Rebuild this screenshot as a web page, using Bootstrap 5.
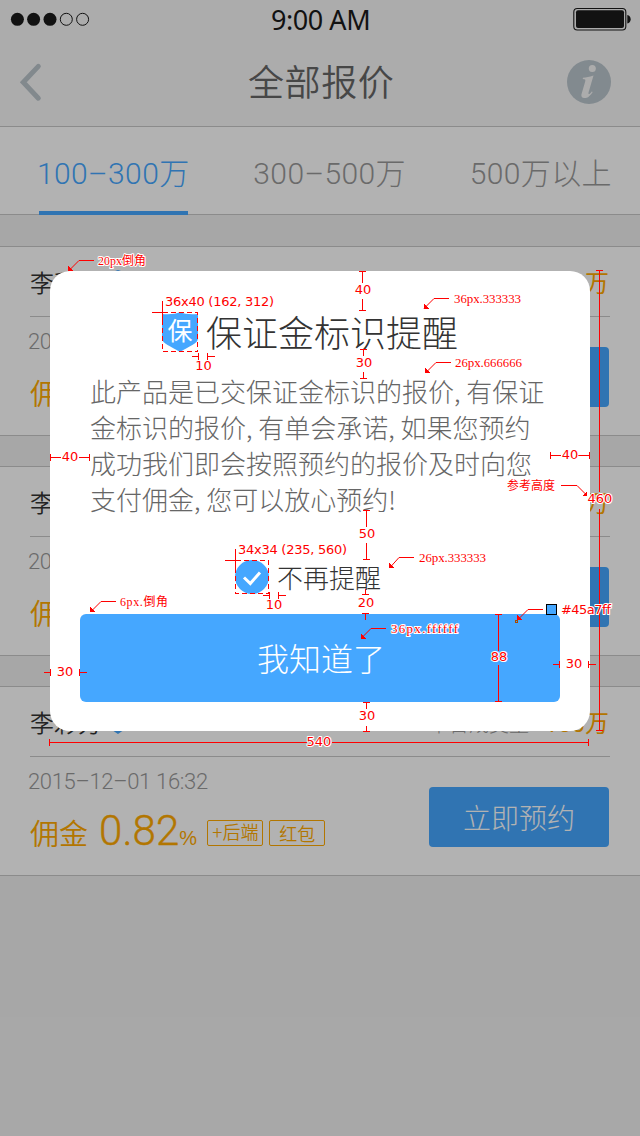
<!DOCTYPE html>
<html lang="zh-CN">
<head>
<meta charset="utf-8">
<meta name="viewport" content="width=device-width, initial-scale=1">
<title>全部报价</title>
<link href="https://cdn.jsdelivr.net/npm/bootstrap@5.3.0/dist/css/bootstrap.min.css" rel="stylesheet">
<style>
  body{font-family:"Noto Sans CJK SC",sans-serif;font-weight:300;background:#f0f0f0;line-height:1;color:#333}
  .screen{width:640px;height:1136px;overflow:hidden}
  .num{font-family:Roboto,"Noto Sans CJK SC",sans-serif;font-weight:300}
  .top-area{height:127px;background:#f7f7f7;border-bottom:1px solid #c8c8c8}
  .status{height:40px;padding:0 9px 0 10px}
  .clock{font:400 27px/40px "Noto Sans","Open Sans",sans-serif;letter-spacing:-.45px;color:#1a1a1a;left:271px;top:0}
  .titlebar{height:84px;padding:0 29px 0 19px}
  .titlebar h1{font-size:36px;font-weight:350;color:#666;letter-spacing:.6px;left:248px;top:22px;line-height:36px}
  .tabs{height:88px;background:#fff;border-bottom:1px solid #c8c8c8;padding:0 28px 0 37px}
  .tabs a{height:88px;line-height:93px;font-size:30px;color:#999;text-decoration:none;letter-spacing:.4px}
  .tabs a.on{color:#45a7ff;position:relative}
  .tabs a.on::after{content:"";position:absolute;left:2px;width:149px;bottom:0;height:4px;background:#45a7ff}
  .offers{padding-top:31px;gap:30px}
  .offer{height:190px;background:#fff;border:solid #c8c8c8;border-width:1px 0;padding:0 31px 0 30px}
  .offer-head{height:70px;border-bottom:1px solid #c8c8c8;font-size:24px;margin-right:-1px;padding:1px 1px 0 0}
  .who{width:78px;font-weight:350}
  .note-text{color:#999;font-size:20px;padding-top:3px}
  .sum{width:80px;text-align:right;font-size:24px;font-weight:400;color:#fa0;padding-top:3px}
  .date{font-size:22px;color:#999;letter-spacing:-.33px;margin-left:-2px;padding-top:13px;line-height:23px}
  .rate{margin-top:17px;color:#fa0;height:42px}
  .rate-label{font-size:29px;line-height:30px;margin-top:7px;width:69px;font-weight:350}
  .rate-value{font:300 42px/42px Roboto,sans-serif;letter-spacing:.1px;-webkit-text-stroke:.4px #fa0}
  .rate-unit{width:28px;font:400 20px/20px "Liberation Sans",sans-serif;margin-top:18px}
  .tagbox{width:56px;height:26px;border:1px solid #fa0;border-radius:2px;font-size:18px;margin:10px 6px 0 0;white-space:nowrap;font-weight:350}
  .book{width:180px;height:60px;border:0;border-radius:4px;background:#45a7ff;color:#fff;font-size:28px;font-weight:300;line-height:60px;margin-top:30px;padding:0}
  .shade{background:rgba(0,0,0,.3)}
  .dialog-box{left:50px;top:271px;width:540px;height:460px;border-radius:20px;background:#fff;padding:40px 30px 30px}
  .dialog-box h2{font-size:36px;line-height:40px;font-weight:300;margin:0;color:#333}
  .msg{font-size:26px;line-height:36px;color:#666;margin:20px 10px 0;white-space:nowrap}
  .remind{font-size:26px;line-height:33px;margin-top:43px;padding-left:155px}
  .ok{height:88px;border:0;border-radius:6px;background:#45a7ff;color:#fff;font-size:32px;font-weight:300;margin-top:20px;padding:0 0 3px 2px}
  .spec{pointer-events:none}
  .spec path,.spec rect{fill:none;stroke:#f00;stroke-width:1;shape-rendering:crispEdges}
  .spec .lead-line{shape-rendering:auto}
  .spec .tip{fill:#f00;stroke:none}
  .spec text{font:13px "DejaVu Sans",sans-serif;fill:#f00;stroke:#fff;stroke-width:2px;paint-order:stroke;stroke-linejoin:round}
  .spec .bm{font:13px "Liberation Serif","Noto Sans CJK SC",serif}
  .spec .bm.cn{font-size:12px}
</style>
</head>
<body>
<div class="screen position-relative">
  <header class="top-area position-relative">
    <div class="status d-flex justify-content-between align-items-start">
      <svg width="82" height="38" viewBox="10 0 82 38"><g fill="#1a1a1a"><circle cx="17.4" cy="19.3" r="6.5"/><circle cx="33.6" cy="19.3" r="6.5"/><circle cx="50" cy="19.3" r="6.5"/></g><g fill="none" stroke="#1a1a1a"><circle cx="66.3" cy="19.3" r="6"/><circle cx="82.6" cy="19.3" r="6"/></g></svg>
      <span class="clock position-absolute">9:00 AM</span>
      <svg width="60" height="38" viewBox="571 0 60 38"><rect x="573.8" y="8.5" width="52" height="21.5" rx="3.5" fill="none" stroke="#1a1a1a" stroke-width="1.1"/><rect x="576" y="10.3" width="48" height="17.6" rx="2" fill="#1a1a1a"/><path d="M627.3 15c4.500 1 4.500 7.500 0 8.500z" fill="#1a1a1a"/></svg>
    </div>
    <div class="titlebar d-flex justify-content-between align-items-center position-relative">
      <svg width="24" height="40" viewBox="19 62.500 24 40" fill="none" stroke="#bac4cb" stroke-width="5" stroke-linecap="round" stroke-linejoin="miter"><path d="M38.300 66.900 23.300 82.800l15 15.900"/></svg>
      <h1 class="position-absolute m-0">全部报价</h1>
      <svg width="44" height="44" viewBox="567 60 44 44"><circle cx="589" cy="82" r="22" fill="#bbc6cd"/><circle cx="592.300" cy="68.500" r="3.500" fill="#f7f7f7"/><path d="M583 77.800c3.500-.3 6-.8 10.500-2.300l-4.900 16.800c-.6 2.300.6 2.700 3.200-.9l.9.700c-3.300 5-5.700 6-7.700 6-2.900 0-4.300-1.600-3.300-4.600l3.500-12.100c.5-1.800.1-2.400-2.500-2.500z" fill="#f7f7f7"/></svg>
    </div>
  </header>
  <nav class="tabs num d-flex justify-content-between">
    <a class="on" href="#">100–300万</a><a href="#">300–500万</a><a href="#">500万以上</a>
  </nav>
  <main class="offers d-flex flex-column">
    <section class="offer">
      <div class="offer-head d-flex align-items-center"><span class="who">李彩芳</span><svg width="20" height="24" viewBox="0 0 36 40" preserveAspectRatio="none"><path d="M0 2Q12 3 18 0q6 3 18 2v24c0 6-9 8-18 14C9 34 0 32 0 26z" fill="#45a7ff"/></svg><span class="note-text ms-auto">平台成交量</span><span class="sum num">100万</span></div>
      <div class="d-flex justify-content-between"><div><div class="date num">2015–12–01 16:32</div><div class="rate d-flex align-items-start"><span class="rate-label">佣金</span></div></div><button class="book btn">立即预约</button></div>
    </section>
    <section class="offer">
      <div class="offer-head d-flex align-items-center"><span class="who">李彩芳</span><span class="sum num ms-auto">100万</span></div>
      <div class="d-flex justify-content-between"><div><div class="date num">2015–12–01 16:32</div><div class="rate d-flex align-items-start"><span class="rate-label">佣金</span></div></div><button class="book btn">立即预约</button></div>
    </section>
    <section class="offer">
      <div class="offer-head d-flex align-items-center"><span class="who">李彩芳</span><svg width="20" height="24" viewBox="0 0 36 40" preserveAspectRatio="none"><path d="M0 2Q12 3 18 0q6 3 18 2v24c0 6-9 8-18 14C9 34 0 32 0 26z" fill="#45a7ff"/></svg><span class="note-text ms-auto">平台成交量</span><span class="sum num">100万</span></div>
      <div class="d-flex justify-content-between"><div><div class="date num">2015–12–01 16:32</div><div class="rate d-flex align-items-start"><span class="rate-label">佣金</span><span class="rate-value">0.82</span><span class="rate-unit">%</span><span class="tagbox num d-flex align-items-center justify-content-center">+后端</span><span class="tagbox d-flex align-items-center justify-content-center">红包</span></div></div><button class="book btn">立即预约</button></div>
    </section>
  </main>
  <div class="shade position-absolute top-0 start-0 w-100 h-100"></div>
  <div class="dialog-box position-absolute" role="dialog">
    <div class="d-flex" style="padding-left:82px">
      <svg class="me-2" width="36" height="42" viewBox="0 -1 36 42"><path d="M0 2Q12 3 18 0q6 3 18 2v24c0 6-9 8-18 14C9 34 0 32 0 26z" fill="#45a7ff"/><text x="18" y="28" font-size="25" font-weight="400" text-anchor="middle" fill="#fff">保</text></svg>
      <h2>保证金标识提醒</h2>
    </div>
    <p class="msg mb-0">此产品是已交保证金标识的报价, 有保证<br>金标识的报价, 有单会承诺, 如果您预约<br>成功我们即会按照预约的报价及时向您<br>支付佣金, 您可以放心预约!</p>
    <div class="remind d-flex"><svg width="34" height="34" viewBox="0 0 34 34"><circle cx="17" cy="17" r="17" fill="#45a7ff"/><path d="m9 17.500 6.300 6L25 12.500" fill="none" stroke="#fff" stroke-width="3"/></svg><span class="ms-2">不再提醒</span></div>
    <button class="ok btn w-100 d-block">我知道了</button>
  </div>
  <svg class="spec position-absolute top-0 start-0" width="640" height="1136" viewBox="0 0 640 1136">
    <path d="M362.500 271v12m0 16v11.500M359 271.500h7M359 310.500h7
      M363.500 349v7m0 16v6.500M360 349.500h7M360 378.500h7
      M366.500 510v17m0 16v16.500M363 510.500h7M363 559.500h7
      M365.500 589v5M362 594.500h7M362 613.500h7m-3.500 0v6.500
      M366.500 702v7M363 702.500h7m-3.500 23v6M363 731.500h7
      M50 742.500h257m25 0h257M49.500 739v7M588.500 739v7
      M599.500 270v222m0 17v221M596 270.500h7M596 730.500h7
      M50 457.500h11m18 0h10M50.500 454v7M89.500 454v7
      M551 455.500h10m17 0h11M550.500 452v7M589.500 452v7
      M498.500 614v37m0 14v36M495 614.500h7M495 701.500h7
      M44 672.500h6M50.500 669v7M79.500 669v7m0-3.500h7
      M553 664.500h6M559.500 661v7M588.500 661v7m0-3.500h7
      M152 312.500h13M162.500 301v19M192 356.500h6M198.500 353v7M207.500 353v7m0-3.500h7
      M225 560.500h13M235.500 549v19M263 595.500h6M269.500 592v7M278.500 592v7m0-3.500h7"/>
    <rect x="162.500" y="312.500" width="35" height="39" stroke-dasharray="5 3"/>
    <rect x="235.500" y="560.500" width="33" height="33" stroke-dasharray="5 3"/>
    <path class="lead-line" d="M94 260.500H79l-10 10M449 298.500h-15l-10 10M451 362.500h-15l-10 10M561 485.500h16l9 9M116 601.500h-15l-10 10M414 557.500h-15l-9 10M386 628.500h-15l-9 9M543 609.500h-15l-10 10"/>
    <path class="tip" d="M68 266v5h5zM424 304v5h5zM425 368v5h5zM587 491v5h-5zM90 607v5h5zM389 563v5h5zM361 634v5h5zM517 615v5h5z"/>
    <rect x="515.500" y="620.500" width="2" height="2" style="stroke:#a64b00"/>
    <rect x="546.500" y="604.500" width="10" height="10" style="fill:#45a7ff;stroke:#000"/>
    <g text-anchor="middle">
      <text x="363" y="294">40</text><text x="364" y="367">30</text><text x="367" y="538">50</text><text x="366" y="607">20</text><text x="367" y="720">30</text><text x="319" y="746">540</text><text x="600" y="503">460</text><text x="70" y="461">40</text><text x="570" y="459">40</text><text x="499" y="661">88</text><text x="65" y="676">30</text><text x="574" y="668">30</text><text x="203.500" y="370">10</text><text x="274" y="609">10</text>
    </g>
    <text x="165" y="306" textLength="109">36x40 (162, 312)</text>
    <text x="238" y="554" textLength="109">34x34 (235, 560)</text>
    <text x="561" y="614" textLength="50">#45a7ff</text>
    <text class="bm cn" x="98" y="265" textLength="48">20px倒角</text>
    <text class="bm" x="454" y="303" textLength="67">36px.333333</text>
    <text class="bm" x="455" y="367" textLength="67">26px.666666</text>
    <text class="bm cn" x="507" y="490" textLength="48">参考高度</text>
    <text class="bm cn" x="120" y="606" textLength="48">6px.倒角</text>
    <text class="bm" x="419" y="562" textLength="67">26px.333333</text>
    <text class="bm" x="391" y="633" textLength="67">36px.ffffff</text>
  </svg>
</div>
<script src="https://cdn.jsdelivr.net/npm/bootstrap@5.3.0/dist/js/bootstrap.bundle.min.js"></script>
</body>
</html>
